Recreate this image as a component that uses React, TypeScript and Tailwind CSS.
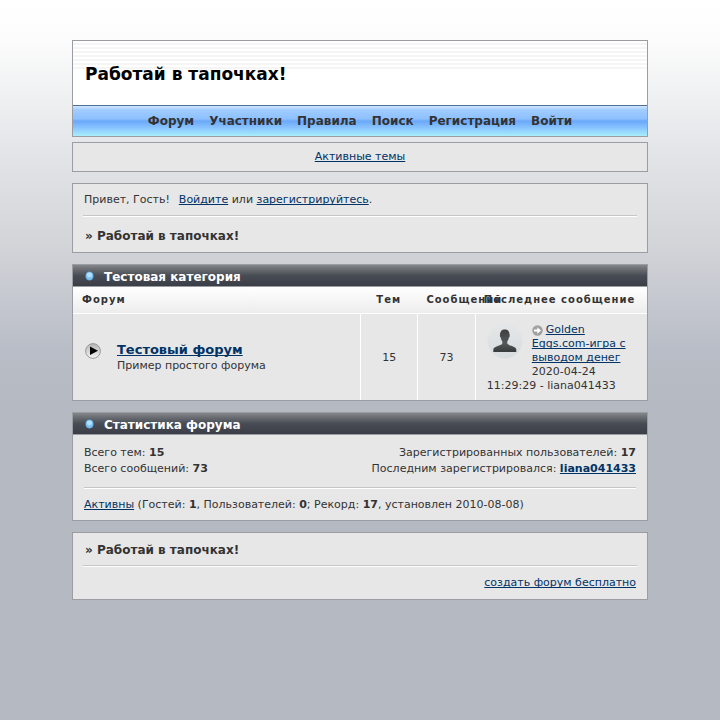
import React from 'react';

const NAV_ITEMS = ['Форум', 'Участники', 'Правила', 'Поиск', 'Регистрация', 'Войти'];
const BOARD_TITLE = 'Работай в тапочках!';

const LINK = 'text-[#003366] underline hover:text-[#1c6bb8]';
const BOX = 'border border-[#9a9da2] bg-[#e7e7e7]';
const CELL = 'border-l border-white pt-0.5';

const Divider: React.FC = () => (
  <hr className="h-0.5 border-0 border-t border-t-[#c6c6c6] bg-white" />
);

const SectionTitle: React.FC<{ children: React.ReactNode }> = ({ children }) => (
  <h2 className="flex h-[22px] items-center gap-2.5 border-b border-[#9a9da2] bg-linear-to-b from-[#83868a] via-[#484c54] via-50% to-[#3b3e46] pt-0.5 pl-3 text-xs font-bold text-white">
    <svg width="9" height="10" viewBox="0 0 9 10" className="mb-0.5" aria-hidden="true">
      <ellipse cx="4.5" cy="5" rx="4.3" ry="4.7" fill="#4d88b8" />
      <ellipse cx="4.5" cy="5" rx="3.6" ry="4" fill="#79bff0" />
      <ellipse cx="4.5" cy="4" rx="2.6" ry="2.4" fill="#b5defb" />
    </svg>
    {children}
  </h2>
);

const ForumIcon: React.FC = () => (
  <svg width="16" height="16" viewBox="0 0 16 16" className="mt-px shrink-0" aria-hidden="true">
    <defs>
      <linearGradient id="knob" x1="0" y1="0" x2="0" y2="1">
        <stop offset="0" stopColor="#b4b4b4" />
        <stop offset="1" stopColor="#f6f6f6" />
      </linearGradient>
    </defs>
    <circle cx="8" cy="8" r="7.4" fill="url(#knob)" stroke="#929292" strokeWidth="0.9" />
    <path d="M5 3.6 13 7.8 5 12Z" fill="#050505" />
  </svg>
);

const Avatar: React.FC = () => (
  <svg width="36" height="36" viewBox="0 0 36 36" className="float-left mr-[9px] mb-2.5" aria-hidden="true">
    <defs>
      <linearGradient id="person" x1="0" y1="0" x2="0" y2="1">
        <stop offset="0" stopColor="#3d4040" />
        <stop offset="0.6" stopColor="#565959" />
        <stop offset="1" stopColor="#383b3b" />
      </linearGradient>
      <linearGradient id="disc" x1="0" y1="0" x2="0" y2="1">
        <stop offset="0" stopColor="#e5e6e7" />
        <stop offset="1" stopColor="#d8dde0" />
      </linearGradient>
    </defs>
    <circle cx="18" cy="18" r="17.5" fill="url(#disc)" />
    <path
      d="M6.3 29v-2.6c.4-1.9 2.6-2.8 5-3.6 2-.7 3.600-1.200 4-2.200v-2.300c-.9-.9-1.400-2.300-1.600-3.800-.7-.3-.9-1-.8-2.200.3-4 1.900-5.700 4.900-5.700s4.700 1.700 4.900 5.700c.1 1.200-.2 1.900-.8 2.200-.2 1.500-.7 2.900-1.600 3.800v2.300c.4 1 2 1.500 4 2.200 2.400.8 4.600 1.700 5 3.600V29Z"
      fill="url(#person)"
    />
  </svg>
);

const GoToIcon: React.FC = () => (
  <svg width="11" height="11" viewBox="0 0 11 11" className="mr-[3px] inline-block align-[-3px]" aria-hidden="true">
    <circle cx="5.5" cy="5.5" r="5.2" fill="#a0a0a0" />
    <path d="M2 4.5h3.300V2.300L9 5.500 5.300 8.700V6.500H2Z" fill="#fff" />
  </svg>
);

const App: React.FC = () => {
  return (
    <div className="min-h-screen bg-[#b5bac2] bg-[linear-gradient(#fff_0px,#fcfcfc_40px,#e3e5e8_150px,#d3d5d9_240px,#b9bdc7_350px,#b5bac2_400px)] bg-no-repeat px-[10%] pt-10 pb-10 font-['DejaVu_Sans',sans-serif] text-[11px] leading-4 text-[#333] [text-decoration-skip-ink:none]">
      <header className="mb-[5px] border border-[#9a9da2] bg-white">
        <div className="bg-[repeating-linear-gradient(#fff_0px,#fff_2px,#f5f5f5_2px,#f5f5f5_4px)] bg-[length:100%_30px] bg-no-repeat">
          <h1 className="flex h-16 items-center px-3 pt-0.5 text-[17px] font-bold text-black">
            {BOARD_TITLE}
          </h1>
        </div>
        <nav className="border-t border-[#4f6f93] bg-[linear-gradient(#d0e6ff_0px,#a0ccff_4px,#8cc0ff_13px,#6aa8f8_15px,#86c0ff_21px,#a8eefc_30px)]">
          <ul className="flex h-[30px] items-center justify-center gap-[15px] text-xs font-bold">
            {NAV_ITEMS.map((item) => (
              <li key={item}>
                <a href="#" className="hover:underline">{item}</a>
              </li>
            ))}
          </ul>
        </nav>
      </header>

      <div className={`${BOX} mb-[11px] py-1.5 text-center`}>
        <a href="#" className={LINK}>Активные темы</a>
      </div>

      <div className={`${BOX} mb-[11px] px-2.5`}>
        <p className="px-px pt-2 pb-[7px]">
          <span className="mr-[9px]">Привет, Гость!</span>
          <a href="#" className={LINK}>Войдите</a> или{' '}
          <a href="#" className={LINK}>зарегистрируйтесь</a>.
        </p>
        <Divider />
        <p className="px-0.5 pt-[11px] pb-2 text-xs leading-4 font-bold">» {BOARD_TITLE}</p>
      </div>

      <section className={`${BOX} mb-[11px]`}>
        <SectionTitle>Тестовая категория</SectionTitle>
        <table className="w-full table-fixed border-separate border-spacing-0">
          <thead>
            <tr className="h-[27px] bg-linear-to-b from-white to-[#ececec] text-left text-[10px] tracking-widest whitespace-nowrap">
              <th className="w-1/2 border-b border-white pl-[9px]">Форум</th>
              <th className="w-1/10 border-b border-white text-center">Тем</th>
              <th className="w-1/10 border-b border-white pl-[9px]">Сообщений</th>
              <th className="w-3/10 border-b border-white pl-[9px]">Последнее сообщение</th>
            </tr>
          </thead>
          <tbody>
            <tr>
              <td className="pt-0.5 pl-3">
                <div className="flex items-start gap-4">
                  <ForumIcon />
                  <div>
                    <h3 className="text-[13px] leading-4 font-bold">
                      <a href="#" className={LINK}>Тестовый форум</a>
                    </h3>
                    <p>Пример простого форума</p>
                  </div>
                </div>
              </td>
              <td className={`${CELL} text-center`}>15</td>
              <td className={`${CELL} text-center`}>73</td>
              <td className="border-l border-white px-[11px] pt-[9px] pb-[7px] leading-[14px]">
                <Avatar />
                <GoToIcon />
                <a href="#" className={LINK}>Golden Eggs.com-игра с выводом денег</a>{' '}
                2020-04-24 11:29:29 - liana041433
              </td>
            </tr>
          </tbody>
        </table>
      </section>

      <section className={`${BOX} mb-[11px]`}>
        <SectionTitle>Статистика форума</SectionTitle>
        <div className="px-[11px] pt-2.5 pb-[7px]">
          <div className="mb-2.5 flex justify-between">
            <ul>
              <li>Всего тем: <strong>15</strong></li>
              <li>Всего сообщений: <strong>73</strong></li>
            </ul>
            <ul className="text-right">
              <li>Зарегистрированных пользователей: <strong>17</strong></li>
              <li>
                Последним зарегистрировался:{' '}
                <a href="#" className={`${LINK} font-bold`}>liana041433</a>
              </li>
            </ul>
          </div>
          <Divider />
          <p className="pt-2">
            <a href="#" className={LINK}>Активны</a> (Гостей: <strong>1</strong>, Пользователей:{' '}
            <strong>0</strong>; Рекорд: <strong>17</strong>, установлен 2010-08-08)
          </p>
        </div>
      </section>

      <footer className={`${BOX} px-2.5`}>
        <p className="px-0.5 pt-[9px] pb-[7px] text-xs leading-4 font-bold">» {BOARD_TITLE}</p>
        <Divider />
        <p className="px-px py-2 text-right">
          <a href="#" className={LINK}>создать форум бесплатно</a>
        </p>
      </footer>
    </div>
  );
};

export default App;
